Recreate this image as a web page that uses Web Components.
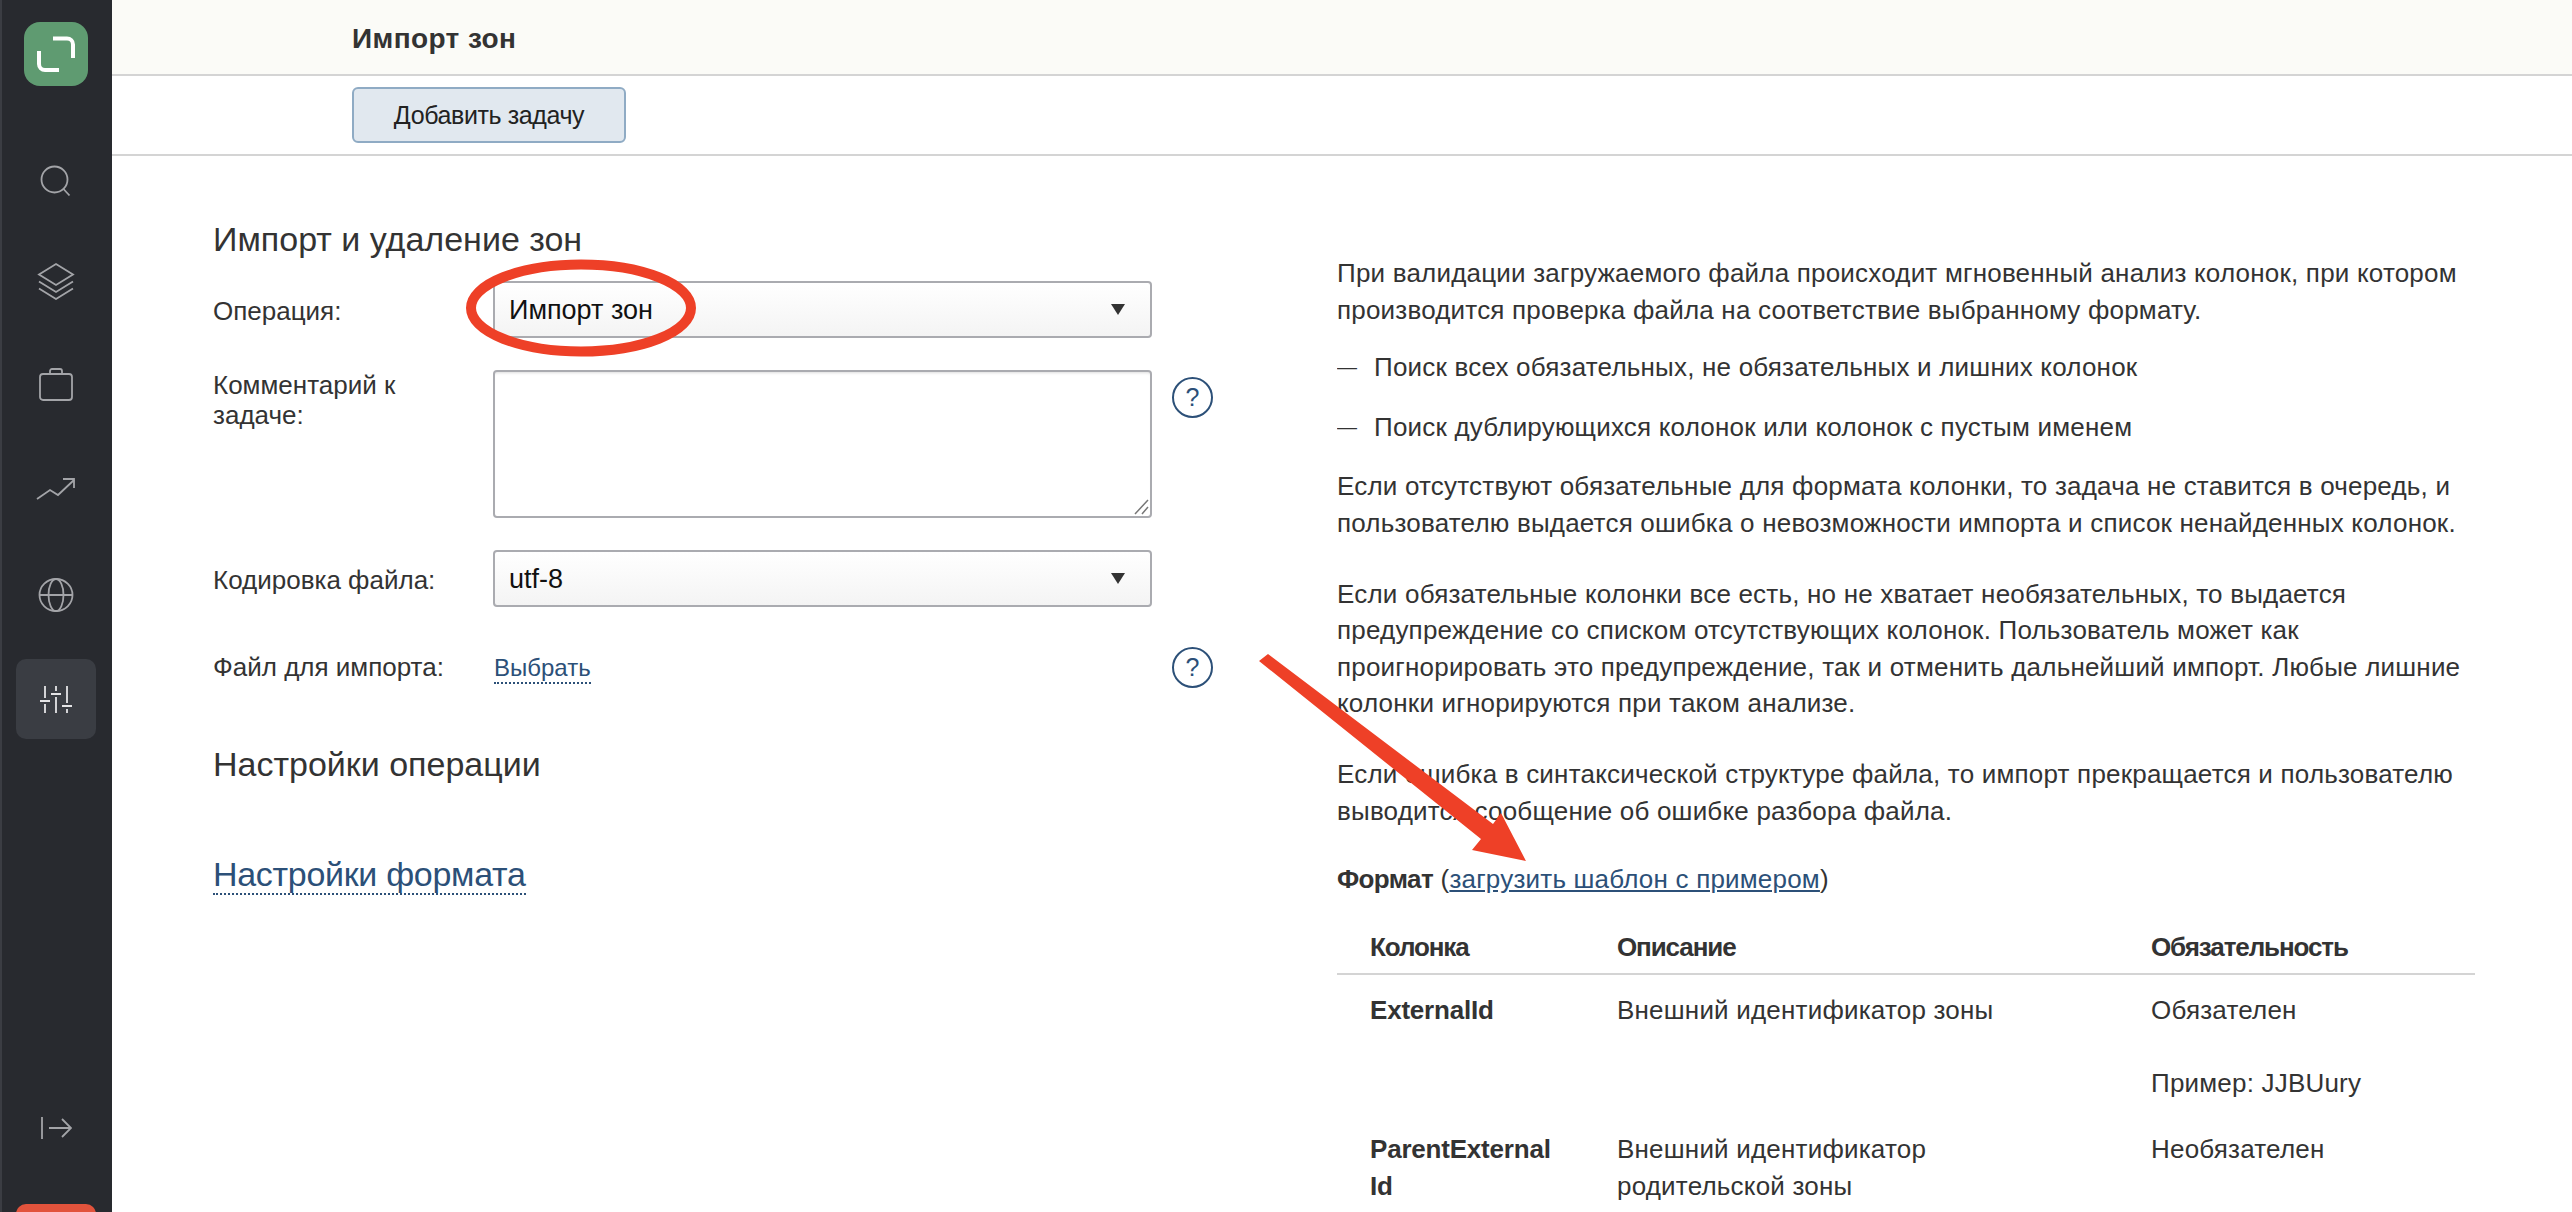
<!DOCTYPE html>
<html lang="ru">
<head>
<meta charset="utf-8">
<title>Импорт зон</title>
<style>
  html, body { margin: 0; height: 100%; overflow: hidden; background: #fff; }
  body { font-family: "Liberation Sans", Arial, sans-serif; color: #333; }
</style>
</head>
<body>
<template id="tpl-app-shell">
  <style>
    :host { display: grid; grid-template-columns: 112px 1fr; width: 2572px; height: 1212px; position: relative; overflow: hidden; }
    main { display: flex; flex-direction: column; min-width: 0; }
  </style>
  <slot name="nav"></slot>
  <main><slot></slot></main>
  <slot name="overlay"></slot>
</template>

<template id="tpl-side-nav">
  <style>
    :host { display: flex; flex-direction: column; align-items: center; background: #282a2f; border-left: 2px solid #3b3d43; box-sizing: border-box; height: 1212px; overflow: hidden; }
    .logo { width: 64px; height: 64px; margin: 22px 0 0 -2px; background: #5f9b71; border-radius: 16px; display: flex; }
    .item { width: 80px; height: 80px; margin-left: -2px; display: flex; align-items: center; justify-content: center; border-radius: 10px; flex: none; }
    .item svg { fill: none; stroke: #a3a4a8; stroke-width: 1.800; }
    .active { background: #3a3d43; }
    .active svg { stroke: #e4e4e6; }
    .spacer { flex: 1; }
    .red { width: 80px; height: 60px; margin: 0 0 -52px -2px; background: #e2533c; border-radius: 10px; flex: none; }
  </style>
  <div class="logo">
    <svg width="64" height="64" viewBox="0 0 64 64" fill="none" stroke="#fff" stroke-width="4">
      <path d="M29 16.500H43a6 6 0 0 1 6 6V36"/>
      <path d="M15 29V42a6 6 0 0 0 6 6H35"/>
    </svg>
  </div>
  <div class="item" style="margin-top:55px"><svg width="34" height="34" viewBox="0 0 34 34"><circle cx="15.500" cy="15.500" r="13"/><path d="M24.500 25l6 6.500"/></svg></div>
  <div class="item" style="margin-top:20px"><svg width="38" height="38" viewBox="0 0 38 38"><path d="M19 2l17 10.500-17 10.500L2 12.500z"/><path d="M2 19.500L19 30l17-10.500"/><path d="M2 26.500L19 37l17-10.500"/></svg></div>
  <div class="item" style="margin-top:24px"><svg width="36" height="34" viewBox="0 0 36 34"><rect x="2" y="6" width="32" height="26" rx="3"/><path d="M12 6V3a2 2 0 0 1 2-2h8a2 2 0 0 1 2 2v3"/></svg></div>
  <div class="item" style="margin-top:24px"><svg width="40" height="24" viewBox="0 0 40 24"><path d="M1 22l13-9 8 5L38 3"/><path d="M27 2h11v9"/></svg></div>
  <div class="item" style="margin-top:26px"><svg width="36" height="36" viewBox="0 0 36 36"><ellipse cx="18" cy="18" rx="16.500" ry="16"/><ellipse cx="18" cy="18" rx="7.500" ry="16"/><path d="M1.500 18h33"/></svg></div>
  <div class="item active" style="margin-top:24px"><svg width="34" height="30" viewBox="0 0 34 30"><path d="M6 2v12M6 20v9M1 17h10M17 2v5M17 13v16M12 10h10M28 2v17M28 25v4M23 22h10"/></svg></div>
  <div class="spacer"></div>
  <div class="item" style="margin-bottom:36px"><svg width="32" height="24" viewBox="0 0 32 24"><path d="M2 1v22M9 12h22M22 3l9 9-9 9"/></svg></div>
  <div class="red"></div>
</template>

<template id="tpl-page-title">
  <style>
    :host { display: flex; align-items: center; height: 74px; box-sizing: content-box; padding-left: 240px; background: #fbfbf7; border-bottom: 2px solid #d4d4d4; font-size: 28px; font-weight: 700; letter-spacing: 0.4px; color: #333; }
    span { padding-top: 3px; }
  </style>
  <span><slot></slot></span>
</template>

<template id="tpl-action-bar">
  <style>
    :host { display: flex; align-items: flex-start; height: 80px; padding: 11px 0 0 240px; box-sizing: border-box; border-bottom: 2px solid #d4d4d4; }
    button { width: 274px; height: 56px; box-sizing: border-box; background: #e1e8ef; border: 2px solid #8fabc4; border-radius: 6px; font: 25px "Liberation Sans", Arial, sans-serif; letter-spacing: -0.400px; color: #222; padding: 0; }
  </style>
  <button><slot></slot></button>
</template>

<template id="tpl-two-panes">
  <style>
    :host { display: grid; grid-template-columns: 1124px 1138px; padding-left: 101px; flex: 1; min-height: 0; }
  </style>
  <slot></slot>
</template>

<template id="tpl-import-form">
  <style>
    :host { display: flex; flex-direction: column; padding-top: 65px; }
  </style>
  <slot></slot>
</template>

<template id="tpl-section-title">
  <style>
    :host { display: block; font-size: 34px; line-height: 36px; color: #333; }
  </style>
  <slot></slot>
</template>

<template id="tpl-form-row">
  <style>
    :host { display: grid; grid-template-columns: 280px 659px 41px; font-size: 26px; line-height: var(--label-lh, 36px); color: #333; }
    .label { padding-top: var(--label-top, 12px); }
    .help { margin-left: 20px; padding-top: var(--help-top, 0); width: 41px; }
  </style>
  <div class="label"><slot name="label"></slot></div>
  <div class="field"><slot></slot></div>
  <div class="help"><slot name="help"></slot></div>
</template>

<template id="tpl-select-box">
  <style>
    :host { display: flex; align-items: center; justify-content: space-between; height: 57px; box-sizing: border-box; padding: 0 25px 0 14px; border: 2px solid #aaabb0; border-radius: 4px; background: linear-gradient(#ffffff, #f4f4f4); font-size: 27px; color: #111; }
    i { width: 0; height: 0; border-left: 7px solid transparent; border-right: 7px solid transparent; border-top: 11px solid #333; }
  </style>
  <span><slot></slot></span><i></i>
</template>

<template id="tpl-text-box">
  <style>
    :host { display: block; height: 148px; box-sizing: border-box; border: 2px solid #aaabb0; border-radius: 4px; background: #fff; box-shadow: inset 0 3px 3px -2px #ddd; position: relative; }
    svg { position: absolute; right: 1px; bottom: 1px; }
  </style>
  <svg width="16" height="16" viewBox="0 0 16 16" fill="none" stroke="#777" stroke-width="1.500"><path d="M2 15L15 1M9 15l6-7"/></svg>
</template>

<template id="tpl-help-icon">
  <style>
    :host { display: flex; align-items: center; justify-content: center; width: 41px; height: 41px; box-sizing: border-box; border: 2px solid #2c5078; border-radius: 50%; font-size: 25px; line-height: 1; color: #2c5078; }
  </style>
  ?
</template>

<template id="tpl-dashed-link">
  <style>
    :host { display: inline; color: #2c5078; border-bottom: 2px dotted #2c5078; padding-bottom: 1px; font-size: 24px; }
  </style>
  <slot></slot>
</template>

<template id="tpl-doc-panel">
  <style>
    :host { display: block; padding-top: 99px; font-size: 26px; line-height: 36.600px; letter-spacing: 0.200px; color: #333; white-space: nowrap; overflow: hidden; }
    ::slotted(p) { margin: 0; }
  </style>
  <slot></slot>
</template>

<template id="tpl-dash-item">
  <style>
    :host { display: flex; }
    i { font-style: normal; font-size: 20px; width: 37px; flex: none; }
  </style>
  <i>—</i><span><slot></slot></span>
</template>

<template id="tpl-format-table">
  <style>
    :host { display: grid; grid-template-columns: 280px 534px 324px; white-space: normal; }
    .h { font-weight: 700; letter-spacing: -1.100px; height: 55px; padding-top: 9px; box-sizing: border-box; border-bottom: 2px solid #d4d4d4; }
    .first { padding-left: 33px; }
  </style>
  <div class="h first"><slot name="c1"></slot></div>
  <div class="h"><slot name="c2"></slot></div>
  <div class="h"><slot name="c3"></slot></div>
  <slot></slot>
</template>

<template id="tpl-format-row">
  <style>
    :host { display: grid; grid-column: 1 / -1; grid-template-columns: 280px 534px 324px; padding-top: var(--row-top, 17px); }
    .name { font-weight: 700; letter-spacing: -0.200px; padding-left: 33px; width: 190px; }
    .text { width: 400px; }
    ::slotted(p) { margin: 0 0 36.400px; }
    ::slotted(p:last-child) { margin-bottom: 30px; }
  </style>
  <div class="name"><slot name="name"></slot></div>
  <div class="text"><slot name="text"></slot></div>
  <div><slot></slot></div>
</template>

<template id="tpl-mark-up">
  <style>
    :host { position: absolute; left: 0; top: 0; width: 2572px; height: 1212px; pointer-events: none; display: block; }
    svg { display: block; }
  </style>
  <svg width="2572" height="1212" viewBox="0 0 2572 1212">
    <ellipse cx="581" cy="308" rx="110" ry="43.500" fill="none" stroke="#ee4027" stroke-width="10"/>
    <path d="M1259 661L1268 654L1493 824L1501 813L1526 861L1472 850L1481 839Z" fill="#ee4027"/>
  </svg>
</template>

<app-shell>
  <side-nav slot="nav"></side-nav>
  <page-title>Импорт зон</page-title>
  <action-bar>Добавить задачу</action-bar>
  <two-panes>
    <import-form>
      <section-title>Импорт и удаление зон</section-title>
      <form-row style="margin-top:24px">
        <span slot="label">Операция:</span>
        <select-box>Импорт зон</select-box>
      </form-row>
      <form-row style="margin-top:32px;--label-top:0px;--help-top:7px;--label-lh:30px">
        <span slot="label">Комментарий к<br>задаче:</span>
        <text-box></text-box>
        <help-icon slot="help"></help-icon>
      </form-row>
      <form-row style="margin-top:32px">
        <span slot="label">Кодировка файла:</span>
        <select-box>utf-8</select-box>
      </form-row>
      <form-row style="margin-top:40px;--label-top:2px">
        <span slot="label">Файл для импорта:</span>
        <span style="display:block;padding:2px 0 0 1px"><dashed-link>Выбрать</dashed-link></span>
        <help-icon slot="help"></help-icon>
      </form-row>
      <section-title style="margin-top:58px">Настройки операции</section-title>
      <section-title style="margin-top:74px"><a style="color:#2c5078;text-decoration:none;border-bottom:2px dotted #2c5078;letter-spacing:-0.300px">Настройки формата</a></section-title>
    </import-form>
    <doc-panel>
      <p>При валидации загружаемого файла происходит мгновенный анализ колонок, при котором<br>производится проверка файла на соответствие выбранному формату.</p>
      <dash-item style="margin-top:21px">Поиск всех обязательных, не обязательных и лишних колонок</dash-item>
      <dash-item style="margin-top:23px">Поиск дублирующихся колонок или колонок с пустым именем</dash-item>
      <p style="margin-top:23px">Если отсутствуют обязательные для формата колонки, то задача не ставится в очередь, и<br>пользователю выдается ошибка о невозможности импорта и список ненайденных колонок.</p>
      <p style="margin-top:34px">Если обязательные колонки все есть, но не хватает необязательных, то выдается<br>предупреждение со списком отсутствующих колонок. Пользователь может как<br>проигнорировать это предупреждение, так и отменить дальнейший импорт. Любые лишние<br>колонки игнорируются при таком анализе.</p>
      <p style="margin-top:34px">Если ошибка в синтаксической структуре файла, то импорт прекращается и пользователю<br>выводится сообщение об ошибке разбора файла.</p>
      <p style="margin-top:32px"><b style="letter-spacing:-0.600px">Формат</b> (<a style="color:#2c5078;text-decoration:underline">загрузить шаблон с примером</a>)</p>
      <format-table style="margin-top:22px">
        <span slot="c1">Колонка</span>
        <span slot="c2">Описание</span>
        <span slot="c3">Обязательность</span>
        <format-row>
          <span slot="name">ExternalId</span>
          <span slot="text">Внешний идентификатор зоны</span>
          <p>Обязателен</p>
          <p>Пример: JJBUury</p>
        </format-row>
        <format-row style="--row-top:0px">
          <span slot="name">ParentExternal<wbr>Id</span>
          <span slot="text">Внешний идентификатор родительской зоны</span>
          <p>Необязателен</p>
        </format-row>
      </format-table>
    </doc-panel>
  </two-panes>
  <mark-up slot="overlay"></mark-up>
</app-shell>

<script>
  // one class per tag, each clones its own template into an open shadow root
  const tags = ['app-shell', 'side-nav', 'page-title', 'action-bar', 'two-panes', 'import-form',
    'section-title', 'form-row', 'select-box', 'text-box', 'help-icon', 'dashed-link',
    'doc-panel', 'dash-item', 'format-table', 'format-row', 'mark-up'];

  tags.forEach((tag) => {
    customElements.define(tag, class extends HTMLElement {
      constructor() {
        super();
        const tpl = document.getElementById('tpl-' + tag);
        this.attachShadow({ mode: 'open' }).appendChild(tpl.content.cloneNode(true));
      }
    });
  });
</script>
</body>
</html>
